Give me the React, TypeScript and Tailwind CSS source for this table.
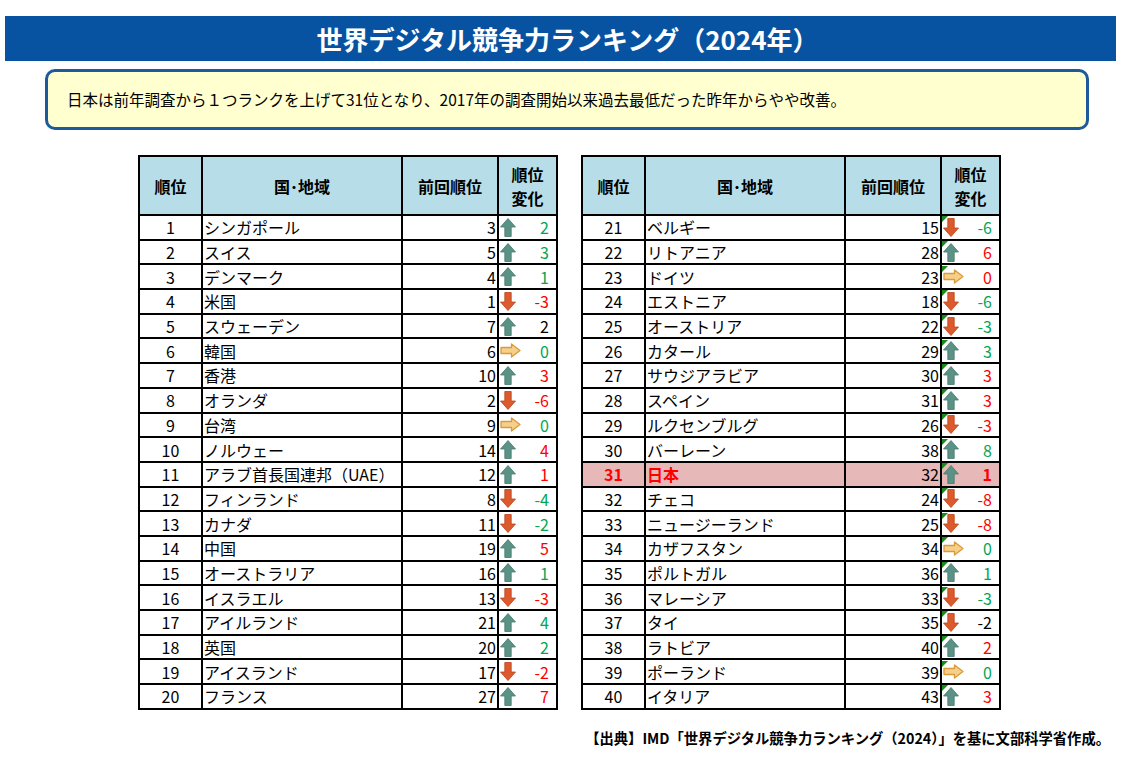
type Dir = 'up' | 'down' | 'flat';
type Row = { rank: number; name: string; prev: number; dir: Dir; change: string; color: 'g' | 'r' | 'k' };

const leftRows: Row[] = [
  { rank: 1, name: 'シンガポール', prev: 3, dir: 'up', change: '2', color: 'g' },
  { rank: 2, name: 'スイス', prev: 5, dir: 'up', change: '3', color: 'g' },
  { rank: 3, name: 'デンマーク', prev: 4, dir: 'up', change: '1', color: 'g' },
  { rank: 4, name: '米国', prev: 1, dir: 'down', change: '-3', color: 'r' },
  { rank: 5, name: 'スウェーデン', prev: 7, dir: 'up', change: '2', color: 'k' },
  { rank: 6, name: '韓国', prev: 6, dir: 'flat', change: '0', color: 'g' },
  { rank: 7, name: '香港', prev: 10, dir: 'up', change: '3', color: 'r' },
  { rank: 8, name: 'オランダ', prev: 2, dir: 'down', change: '-6', color: 'r' },
  { rank: 9, name: '台湾', prev: 9, dir: 'flat', change: '0', color: 'g' },
  { rank: 10, name: 'ノルウェー', prev: 14, dir: 'up', change: '4', color: 'r' },
  { rank: 11, name: 'アラブ首長国連邦（UAE）', prev: 12, dir: 'up', change: '1', color: 'r' },
  { rank: 12, name: 'フィンランド', prev: 8, dir: 'down', change: '-4', color: 'g' },
  { rank: 13, name: 'カナダ', prev: 11, dir: 'down', change: '-2', color: 'g' },
  { rank: 14, name: '中国', prev: 19, dir: 'up', change: '5', color: 'r' },
  { rank: 15, name: 'オーストラリア', prev: 16, dir: 'up', change: '1', color: 'g' },
  { rank: 16, name: 'イスラエル', prev: 13, dir: 'down', change: '-3', color: 'r' },
  { rank: 17, name: 'アイルランド', prev: 21, dir: 'up', change: '4', color: 'g' },
  { rank: 18, name: '英国', prev: 20, dir: 'up', change: '2', color: 'g' },
  { rank: 19, name: 'アイスランド', prev: 17, dir: 'down', change: '-2', color: 'r' },
  { rank: 20, name: 'フランス', prev: 27, dir: 'up', change: '7', color: 'r' },
];

const rightRows: Row[] = [
  { rank: 21, name: 'ベルギー', prev: 15, dir: 'down', change: '-6', color: 'g' },
  { rank: 22, name: 'リトアニア', prev: 28, dir: 'up', change: '6', color: 'r' },
  { rank: 23, name: 'ドイツ', prev: 23, dir: 'flat', change: '0', color: 'r' },
  { rank: 24, name: 'エストニア', prev: 18, dir: 'down', change: '-6', color: 'g' },
  { rank: 25, name: 'オーストリア', prev: 22, dir: 'down', change: '-3', color: 'g' },
  { rank: 26, name: 'カタール', prev: 29, dir: 'up', change: '3', color: 'g' },
  { rank: 27, name: 'サウジアラビア', prev: 30, dir: 'up', change: '3', color: 'r' },
  { rank: 28, name: 'スペイン', prev: 31, dir: 'up', change: '3', color: 'r' },
  { rank: 29, name: 'ルクセンブルグ', prev: 26, dir: 'down', change: '-3', color: 'r' },
  { rank: 30, name: 'バーレーン', prev: 38, dir: 'up', change: '8', color: 'g' },
  { rank: 31, name: '日本', prev: 32, dir: 'up', change: '1', color: 'r' },
  { rank: 32, name: 'チェコ', prev: 24, dir: 'down', change: '-8', color: 'r' },
  { rank: 33, name: 'ニュージーランド', prev: 25, dir: 'down', change: '-8', color: 'r' },
  { rank: 34, name: 'カザフスタン', prev: 34, dir: 'flat', change: '0', color: 'g' },
  { rank: 35, name: 'ポルトガル', prev: 36, dir: 'up', change: '1', color: 'g' },
  { rank: 36, name: 'マレーシア', prev: 33, dir: 'down', change: '-3', color: 'g' },
  { rank: 37, name: 'タイ', prev: 35, dir: 'down', change: '-2', color: 'k' },
  { rank: 38, name: 'ラトビア', prev: 40, dir: 'up', change: '2', color: 'r' },
  { rank: 39, name: 'ポーランド', prev: 39, dir: 'flat', change: '0', color: 'g' },
  { rank: 40, name: 'イタリア', prev: 43, dir: 'up', change: '3', color: 'r' },
];

const colorClass = { g: 'text-[#00a651]', r: 'text-[#ff0000]', k: 'text-black' };

// arrow glyphs in the change column
function Arrow({ dir }: { dir: Dir }) {
  if (dir === 'flat') {
    return (
      <svg width="21" height="15" viewBox="0 0 21 15" className="shrink-0 w-[21px] h-[15px]">
        <path d="M1 4.5 H11.5 V1 L20 7.5 L11.5 14 V10.5 H1 Z" fill="#f6cf8a" stroke="#d99a3a" strokeWidth="1.3" strokeLinejoin="round" />
      </svg>
    );
  }
  const up = dir === 'up';
  return (
    <svg width="16" height="19" viewBox="0 0 16 19" className="shrink-0 w-[16px] h-[19px]">
      {up ? (
        <path d="M8 0.5 L15.5 9 L11.2 9 L11.2 18.5 L4.8 18.5 L4.8 9 L0.5 9 Z" fill="#5a9386" stroke="#47796d" strokeWidth="0.8" strokeLinejoin="round" />
      ) : (
        <path d="M4.8 0.5 L11.2 0.5 L11.2 10 L15.5 10 L8 18.5 L0.5 10 L4.8 10 Z" fill="#dc5a2c" stroke="#b8441d" strokeWidth="0.8" strokeLinejoin="round" />
      )}
    </svg>
  );
}

function RankTable({ rows, marks }: { rows: Row[]; marks?: boolean }) {
  return (
    <table className="border-collapse border-2 border-black text-[16px] leading-none table-fixed w-[418px]">
      <colgroup>
        <col className="w-[63px]" />
        <col className="w-[200px]" />
        <col className="w-[96px]" />
        <col className="w-[59px]" />
      </colgroup>
      <thead>
        <tr className="h-[59px] bg-[#b7dee8] font-bold">
          <th className="border-2 border-black">順位</th>
          <th className="border-2 border-black">国･地域</th>
          <th className="border-2 border-black">前回順位</th>
          <th className="border-2 border-black leading-[24px]">
            順位
            <br />
            変化
          </th>
        </tr>
      </thead>
      <tbody>
        {rows.map((r) => {
          const jp = r.name === '日本';
          return (
            <tr key={r.rank} className={`h-[24.7px] ${jp ? 'bg-[#e6b8b7]' : 'bg-white'}`}>
              <td className={`border-2 border-black text-center ${jp ? 'text-[#ff0000] font-bold' : ''}`}>{r.rank}</td>
              <td className={`border-2 border-black pl-[1px] whitespace-nowrap ${jp ? 'text-[#ff0000] font-bold' : ''}`}>{r.name}</td>
              <td className="border-2 border-black text-right pr-[1px]">{r.prev}</td>
              <td className="border-2 border-black p-0">
                <div className="relative flex items-center justify-between h-[22px] pl-[1px] pr-[7px]">
                  {marks && (
                    <span className="absolute left-0 top-0 w-0 h-0 border-t-[6px] border-t-[#1a8a1a] border-r-[6px] border-r-transparent" />
                  )}
                  <Arrow dir={r.dir} />
                  <span className={`${colorClass[r.color]} ${jp ? 'font-bold' : ''}`}>{r.change}</span>
                </div>
              </td>
            </tr>
          );
        })}
      </tbody>
    </table>
  );
}

export default function App() {
  return (
    <div className="w-[1138px] h-[757px] bg-white overflow-hidden font-['Noto_Sans_CJK_JP','Noto_Sans',sans-serif] text-black">
      <div className="pt-[16px] pl-[5px] pr-[22px]">
        <div className="h-[45px] bg-[#0753a1] flex items-center justify-center pl-[14px]">
          <h1 className="text-white font-bold text-[26px]">世界デジタル競争力ランキング（2024年）</h1>
        </div>
      </div>
      <div className="mt-[8px] ml-[45px] w-[1044px] h-[61px] rounded-[10px] border-[3px] border-[#1c5a9c] bg-[#ffffcf] flex items-center pl-[19px]">
        <p className="text-[15.5px]">日本は前年調査から１つランクを上げて31位となり、2017年の調査開始以来過去最低だった昨年からやや改善。</p>
      </div>
      <div className="mt-[25px] flex gap-[23px] pl-[138px]">
        <RankTable rows={leftRows} />
        <RankTable rows={rightRows} marks />
      </div>
      <div className="mt-[17px] pr-[28px] text-right text-[14.3px] font-bold">
        【出典】IMD「世界デジタル競争力ランキング（2024）」を基に文部科学省作成。
      </div>
    </div>
  );
}
